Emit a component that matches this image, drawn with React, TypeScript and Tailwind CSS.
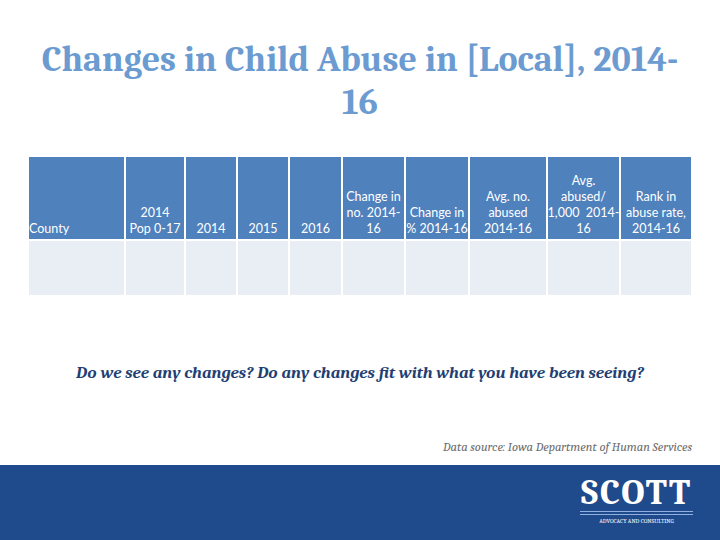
const headers = [
  { label: "County", w: "w-[95px]", align: "text-left" },
  { label: "2014\nPop 0-17", w: "w-[58px]" },
  { label: "2014", w: "w-[50px]" },
  { label: "2015", w: "w-[50px]" },
  { label: "2016", w: "w-[51px]" },
  { label: "Change in\nno. 2014-\n16", w: "w-[61px]" },
  { label: "Change in\n% 2014-16", w: "w-[62px]" },
  { label: "Avg. no.\nabused\n2014-16", w: "w-[76px]" },
  { label: "Avg.\nabused/\n1,000  2014-\n16", w: "w-[71px]" },
  { label: "Rank in\nabuse rate,\n2014-16", w: "w-[70px]" },
];

export default function App() {
  return (
    <div className="flex h-[540px] w-[720px] flex-col overflow-hidden bg-white">
      <h1 className="mt-[38px] px-2 text-center font-serif text-[36px] font-bold leading-[43px] text-[#6b9bd0]">
        Changes in Child Abuse in [Local], 2014-
        <br />
        16
      </h1>

      <div className="mt-[33px] ml-[29px] flex flex-col gap-[2px] font-['Lato'] text-[12.5px] leading-[16px] text-white">
        <div className="flex gap-[2px]">
          {headers.map((h) => (
            <div
              key={h.label}
              className={`${h.w} flex h-[82px] items-end justify-center whitespace-pre bg-[#4f81bd] pb-[2px] ${h.align === "text-left" ? "justify-start text-left" : "text-center"}`}
            >
              {h.label}
            </div>
          ))}
        </div>
        <div className="flex gap-[2px]">
          {headers.map((h) => (
            <div key={h.label} className={`${h.w} h-[54px] bg-[#e9edf4]`} />
          ))}
        </div>
      </div>

      <p className="mt-[65px] text-center font-serif text-[17px] font-bold italic text-[#233e72]">
        Do we see any changes? Do any changes fit with what you have been seeing?
      </p>

      <p className="mt-[52px] pr-[28px] text-right font-serif text-[12.5px] italic text-[#6b6b6b]">
        Data source: Iowa Department of Human Services
      </p>

      <div className="mt-auto flex h-[75px] justify-end bg-[#1f4a8c] pr-[27px] pt-[13px]">
        <div className="flex w-[113px] flex-col items-center">
          <span className="font-serif text-[36px] font-bold leading-[30px] tracking-[2px] text-white">
            SCOTT
          </span>
          <div className="mt-[3px] h-[1px] w-full bg-[#8fb0e0]" />
          <div className="mt-[2px] h-[1px] w-full bg-[#8fb0e0]" />
          <span className="mt-[3px] whitespace-nowrap font-serif text-[6px] leading-[8px] text-white">
            ADVOCACY AND CONSULTING
          </span>
        </div>
      </div>
    </div>
  );
}
